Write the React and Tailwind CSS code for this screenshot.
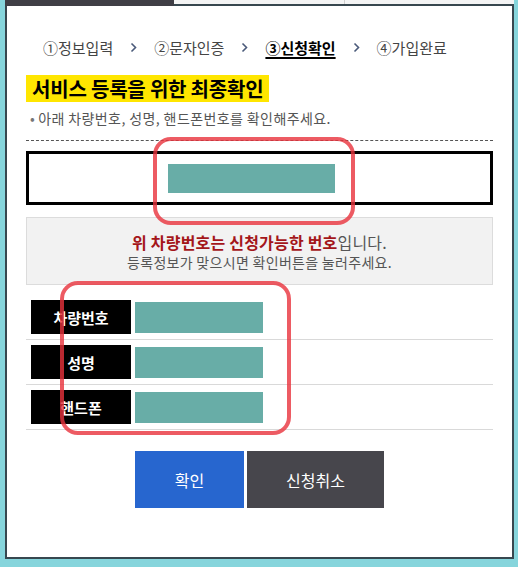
import React from "react";

const font = { fontFamily: '"Noto Sans CJK KR", "Noto Sans", sans-serif' };

function Chevron() {
  return (
    <svg width="7" height="11" viewBox="0 0 7 11" className="mx-[17px]">
      <path d="M1.5 1.5 L5.5 5.5 L1.5 9.5" fill="none" stroke="#4a5a7a" strokeWidth="1.6" />
    </svg>
  );
}

function Row({ label }) {
  return (
    <div className="flex items-center h-[45px] pl-[5px] gap-[4px] border-b border-[#d9d9d9]">
      <div className="w-[100px] h-[34px] bg-black text-white font-bold text-[15px] flex items-center justify-center leading-none">
        {label}
      </div>
      <div className="w-[128px] h-[31px] bg-[#68ada7]" />
    </div>
  );
}

export default function App() {
  return (
    <div className="relative w-[518px] h-[567px] bg-[#86d5dc] pl-[5px] pr-[4px] pb-[8px] overflow-hidden" style={font}>
      {/* tabs strip */}
      <div className="flex h-[4px]">
        <div className="w-[169px] h-[6px] bg-[#3f3e45]" />
        <div className="flex-1 bg-[#f4f4f4] border-r border-[#cfcfcf]" />
        <div className="flex-1 bg-[#f4f4f4]" />
      </div>
      <div className="h-[555px] bg-white border-2 border-[#37474f] flex flex-col px-[19px]">
        {/* steps */}
        <div className="flex items-center pl-[17px] pt-[28px] h-[54px] text-[15px] text-[#444] leading-none">
          <span>①정보입력</span>
          <Chevron />
          <span>②문자인증</span>
          <Chevron />
          <span className="font-bold text-black underline underline-offset-[3px] decoration-[1.5px]">③신청확인</span>
          <Chevron />
          <span>④가입완료</span>
        </div>
        {/* title */}
        <div className="mt-[15px] flex">
          <div className="bg-[#ffe600] h-[27px] px-[6px] flex items-center text-[20px] font-bold text-black leading-none tracking-[-0.2px]">
            서비스 등록을 위한 최종확인
          </div>
        </div>
        <div className="mt-[8px] pl-[4px] text-[14px] text-[#555] leading-none h-[16px] flex items-center tracking-[0.4px]">
          <span className="text-[#777] mr-[3px]">•</span>아래 차량번호, 성명, 핸드폰번호를 확인해주세요.
        </div>
        <div className="mt-[14px] border-t border-dashed border-[#555]" />
        {/* plate box */}
        <div className="mt-[10px] h-[54px] border-[3px] border-black flex items-center pl-[139px]">
          <div className="w-[167px] h-[29px] bg-[#68ada7]" />
        </div>
        {/* notice */}
        <div className="mt-[12px] h-[68px] bg-[#f2f2f2] border border-[#dcdcdc] flex flex-col items-center justify-center gap-[5px] leading-none">
          <div className="text-[16px] text-[#555] tracking-[0.2px]">
            <span className="font-bold text-[#a4161a]">위 차량번호는 신청가능한 번호</span>입니다.
          </div>
          <div className="text-[14px] text-[#555] tracking-[0.3px]">등록정보가 맞으시면 확인버튼을 눌러주세요.</div>
        </div>
        {/* table */}
        <div className="mt-[10px] flex flex-col">
          <Row label="차량번호" />
          <Row label="성명" />
          <Row label="핸드폰" />
        </div>
        {/* buttons */}
        <div className="mt-[21px] flex justify-center gap-[3px]">
          <button className="w-[109px] h-[57px] bg-[#2766cf] text-white text-[16px] leading-none">확인</button>
          <button className="w-[137px] h-[57px] bg-[#47464c] text-white text-[16px] leading-none">신청취소</button>
        </div>
      </div>

      {/* red annotations */}
      <div className="absolute left-[153px] top-[137px] w-[202px] h-[88px] rounded-[18px] border-[4px] border-[#e8323c]/80 blur-[0.5px] pointer-events-none" />
      <div className="absolute left-[60px] top-[281px] w-[231px] h-[154px] rounded-[18px] border-[4px] border-[#e8323c]/80 blur-[0.5px] pointer-events-none" />
    </div>
  );
}
